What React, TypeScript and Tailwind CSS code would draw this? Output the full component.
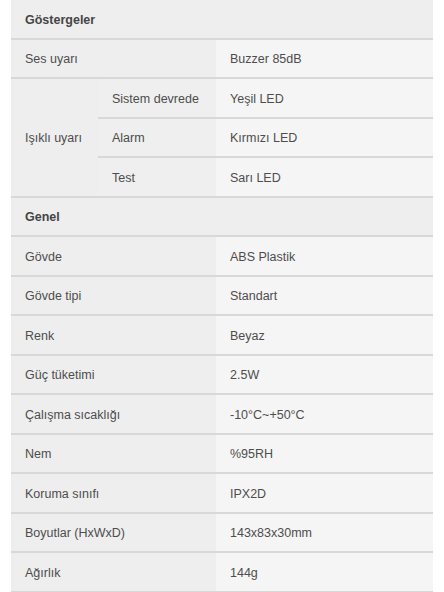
import React from 'react';

type Row = { label: string; value: string };

const FONT = { fontFamily: '"Liberation Sans", Arial, sans-serif' };

const indicatorSubRows: Row[] = [
  { label: 'Sistem devrede', value: 'Yeşil LED' },
  { label: 'Alarm', value: 'Kırmızı LED' },
  { label: 'Test', value: 'Sarı LED' },
];

const generalRows: Row[] = [
  { label: 'Gövde', value: 'ABS Plastik' },
  { label: 'Gövde tipi', value: 'Standart' },
  { label: 'Renk', value: 'Beyaz' },
  { label: 'Güç tüketimi', value: '2.5W' },
  { label: 'Çalışma sıcaklığı', value: '-10°C~+50°C' },
  { label: 'Nem', value: '%95RH' },
  { label: 'Koruma sınıfı', value: 'IPX2D' },
  { label: 'Boyutlar (HxWxD)', value: '143x83x30mm' },
  { label: 'Ağırlık', value: '144g' },
];

const SectionHeader = ({ title }: { title: string }) => (
  <div className="h-[39.5px] flex items-center bg-[#eeeeee] border-b-2 border-[#d8d8d8] pl-[14px] pt-[3px] text-[12.5px] font-semibold text-[#454545]">
    {title}
  </div>
);

const SpecRow = ({ label, value }: Row) => (
  <div className="grid grid-cols-[205px_217px] h-[39.5px] border-b-2 border-[#d8d8d8]">
    <div className="flex items-center bg-[#eeeeee] pl-[14px] pt-[3px]">{label}</div>
    <div className="flex items-center bg-[#f5f5f5] pl-[14px] pt-[3px]">{value}</div>
  </div>
);

const App = () => {
  return (
    <div className="w-full h-[592px] bg-white px-[11px] overflow-hidden" style={FONT}>
      <div className="text-[12.5px] text-[#4d4d4d]">
        <SectionHeader title="Göstergeler" />
        <SpecRow label="Ses uyarı" value="Buzzer 85dB" />

        <div className="grid grid-cols-[87px_118px_217px] grid-rows-[repeat(3,39.5px)]">
          <div className="row-span-3 flex items-center bg-[#eeeeee] pl-[14px] pt-[3px] border-b-2 border-[#d8d8d8]">
            Işıklı uyarı
          </div>
          {indicatorSubRows.map((row) => (
            <React.Fragment key={row.label}>
              <div className="flex items-center bg-[#efefef] pl-[14px] pt-[3px] border-b-2 border-[#d8d8d8]">
                {row.label}
              </div>
              <div className="flex items-center bg-[#f5f5f5] pl-[14px] pt-[3px] border-b-2 border-[#d8d8d8]">
                {row.value}
              </div>
            </React.Fragment>
          ))}
        </div>

        <SectionHeader title="Genel" />
        {generalRows.map((row) => (
          <SpecRow key={row.label} {...row} />
        ))}
      </div>
    </div>
  );
};

export default App;
